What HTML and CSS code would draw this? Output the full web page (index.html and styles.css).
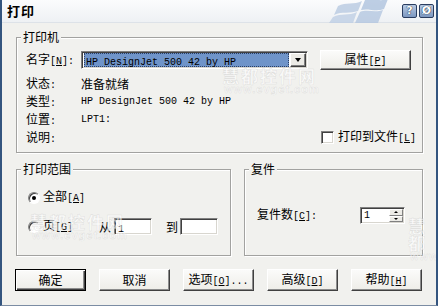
FILE: index.html
```html
<!DOCTYPE html>
<html>
<head>
<meta charset="utf-8">
<title>打印</title>
<link rel="stylesheet" href="styles.css">
</head>
<body>
<div class="win">
  <div class="titlebar">
    <span class="title">打印</span>
    <svg class="flag" width="90" height="23" viewBox="0 0 90 23">
      <path d="M18 6 C26 2 34 5 42 1 L38 11 C30 14 22 11 14 15 Z" fill="#b4c7e0"/>
      <path d="M45 0 C52 -2 60 2 68 -1 L64 9 C56 12 48 8 41 10 Z" fill="#a9bfdc"/>
      <path d="M13 17 C21 13 29 16 37 12 L33 23 L9 23 Z" fill="#bccde4"/>
      <path d="M40 12 C47 9 55 13 63 10 L58 23 L35 23 Z" fill="#b0c4df"/>
    </svg>
    <div class="tbtns"><span class="tbtn">?</span><span class="tbtn">Ø</span></div>
  </div>

  <div class="content">
    <div class="group g1">
      <span class="legend">打印机</span>
      <div class="prow first">
        <span class="lbl">名字<span class="m">[<u>N</u>]:</span></span>
        <div class="combo sunken">
          <span class="sel"><span class="m">HP DesignJet 500 42 by HP</span></span>
          <span class="drop"><i class="tri"></i></span>
        </div>
        <button class="btn prop">属性<span class="m">[<u>P</u>]</span></button>
      </div>
      <div class="prow"><span class="lbl">状态<span class="m">:</span></span><span>准备就绪</span></div>
      <div class="prow"><span class="lbl">类型<span class="m">:</span></span><span class="m">HP DesignJet 500 42 by HP</span></div>
      <div class="prow"><span class="lbl">位置<span class="m">:</span></span><span class="m">LPT1:</span></div>
      <div class="prow"><span class="lbl">说明<span class="m">:</span></span>
        <span class="chkwrap"><span class="chk sunken"></span><span>打印到文件<span class="m">[<u>L</u>]</span></span></span>
      </div>
    </div>

    <div class="row2">
      <div class="group g2">
        <span class="legend">打印范围</span>
        <div class="rrow">
          <span class="radio on"></span><span>全部<span class="m">[<u>A</u>]</span></span>
        </div>
        <div class="rrow second">
          <span class="radio"></span><span>页<span class="m">[<u>G</u>]</span></span>
          <span class="from">从</span><span class="field sunken"><span class="m">1</span></span>
          <span class="to">到</span><span class="field sunken"></span>
        </div>
      </div>
      <div class="group g3">
        <span class="legend">复件</span>
        <div class="crow">
          <span class="clbl">复件数<span class="m">[<u>C</u>]:</span></span>
          <span class="spin sunken"><span class="m num">1</span><span class="spinbtns"><span class="sb"><i class="up"></i></span><span class="sb"><i class="dn"></i></span></span></span>
        </div>
      </div>
    </div>

    <div class="btnrow">
      <button class="btn def">确定</button>
      <button class="btn">取消</button>
      <button class="btn">选项<span class="m">[<u>O</u>]...</span></button>
      <button class="btn">高级<span class="m">[<u>D</u>]</span></button>
      <button class="btn">帮助<span class="m">[<u>H</u>]</span></button>
    </div>
  </div>

  <div class="wm wm1"><span class="wmc">慧都控件网</span><span class="wme">www.evget.com</span></div>
  <div class="wm wm2"><span class="wmc">慧都控件网</span><span class="wme">www.evget.com</span></div>
  <div class="wm wm3"><span class="wmc">慧都</span><span class="wme">www</span></div>
</div>
</body>
</html>
```

FILE: styles.css
```css
html, body {
  margin: 0;
  padding: 0;
  background: #f1f1ee;
}
body {
  font-family: "Noto Sans CJK SC", "Liberation Sans", sans-serif;
  font-size: 12px;
  line-height: 14px;
  color: #000;
}
.m {
  font-family: "Liberation Mono", "Noto Sans CJK SC", monospace;
  font-size: 10px;
}
u { text-decoration: underline; text-underline-offset: 1px; }

.win {
  position: relative;
  width: 438px;
  height: 306px;
  box-sizing: border-box;
  border-left: 2px solid #34557f;
  border-right: 2px solid #34557f;
  border-bottom: 1px solid #7b8ca3;
  background: #f1f1ee;
  display: flex;
  flex-direction: column;
  overflow: hidden;
}

/* title bar */
.titlebar {
  position: relative;
  height: 23px;
  box-sizing: border-box;
  display: flex;
  align-items: center;
  padding-left: 5px;
  background: linear-gradient(#fbfcfd, #eef1f4);
  border-bottom: 1px solid #dde2e8;
}
.title {
  font-weight: bold;
  font-size: 13px;
  letter-spacing: 1px;
}
.flag {
  position: absolute;
  left: 318px;
  top: 0;
  opacity: 0.75;
}
.tbtns {
  position: relative;
  margin-left: auto;
  margin-right: 2px;
  display: flex;
  gap: 2px;
}
.tbtn {
  width: 15px;
  height: 14px;
  box-sizing: border-box;
  border: 1px solid #2a3d60;
  border-radius: 2px;
  background: linear-gradient(#b8cae2, #7c97c0);
  color: #fff;
  font-family: "DejaVu Sans", sans-serif;
  font-weight: bold;
  font-size: 11px;
  line-height: 12px;
  text-align: center;
  text-shadow: 0 0 1px #1d2b45, 0 0 1px #1d2b45;
}

/* content */
.content {
  padding: 14px 13px 0 14px;
  display: flex;
  flex-direction: column;
}
.group {
  position: relative;
  box-sizing: border-box;
  border: 1px solid #a2a2a0;
  box-shadow: inset 1px 1px 0 #fff, 1px 1px 0 #fff;
}
.legend {
  position: absolute;
  top: -8px;
  left: 4px;
  padding: 0 2px;
  background: #f1f1ee;
  white-space: nowrap;
}
.g1 {
  height: 116px;
  padding: 12px 0 0 9px;
}
.prow {
  display: flex;
  align-items: center;
  height: 18px;
  white-space: nowrap;
}
.prow.first {
  height: 20px;
  margin-bottom: 5px;
}
.lbl {
  width: 55px;
  flex: none;
}

.sunken {
  box-sizing: border-box;
  background: #fff;
  border: 1px solid;
  border-color: #808080 #fff #fff #808080;
  box-shadow: inset 1px 1px 0 #404040, inset -1px -1px 0 #d8d6cf;
}
.combo {
  width: 227px;
  height: 18px;
  display: flex;
  align-items: center;
  padding: 1px 1px 1px 2px;
}
.sel {
  flex: 1;
  height: 14px;
  box-sizing: border-box;
  margin-right: 1px;
  background: #6f94c9;
  border: 1px dotted #2b3f64;
  padding-left: 1px;
  line-height: 12px;
  color: #000;
}
.drop {
  width: 16px;
  height: 14px;
  box-sizing: border-box;
  background: #ecebe6;
  border: 1px solid;
  border-color: #fff #404040 #404040 #fff;
  box-shadow: inset -1px -1px 0 #808080;
  display: flex;
  align-items: center;
  justify-content: center;
}
.tri {
  width: 0;
  height: 0;
  border-left: 3.5px solid transparent;
  border-right: 3.5px solid transparent;
  border-top: 4px solid #000;
}

.btn {
  box-sizing: border-box;
  width: 71px;
  height: 22px;
  padding: 0;
  font-family: inherit;
  font-size: 12px;
  line-height: 14px;
  color: #000;
  background: linear-gradient(#fbfbfa, #eeede8);
  border: 1px solid;
  border-color: #fff #404040 #404040 #fff;
  box-shadow: inset -1px -1px 0 #8c8c8c;
  border-radius: 0;
  white-space: nowrap;
}
.btn.prop {
  width: 91px;
  height: 20px;
  margin-left: 12px;
}
.btn.def {
  border: 1px solid #000;
  box-shadow: inset 1px 1px 0 #fff, inset -1px -1px 0 #404040, inset -2px -2px 0 #8c8c8c;
}

.chkwrap {
  margin-left: 240px;
  display: flex;
  align-items: center;
  gap: 4px;
  position: relative;
  top: -1px;
}
.chk {
  width: 13px;
  height: 13px;
  flex: none;
}

/* row 2 */
.row2 {
  display: flex;
  gap: 13px;
  margin-top: 16px;
}
.g2 {
  width: 215px;
  height: 87px;
  padding: 19px 0 0 11px;
}
.g3 {
  flex: 1;
  height: 87px;
  padding: 37px 0 0 12px;
}
.rrow {
  display: flex;
  align-items: center;
  height: 17px;
  white-space: nowrap;
}
.rrow.second {
  margin-top: 12px;
}
.radio {
  position: relative;
  width: 12px;
  height: 12px;
  box-sizing: border-box;
  border-radius: 50%;
  background: #fff;
  border: 1px solid;
  border-color: #808080 #fff #fff #808080;
  box-shadow: inset 1px 1px 0 #404040;
  margin-right: 3px;
  flex: none;
}
.radio.on::after {
  content: "";
  position: absolute;
  left: 3px;
  top: 3px;
  width: 4px;
  height: 4px;
  border-radius: 50%;
  background: #000;
}
.from { margin-left: 26px; margin-right: 3px; }
.to { margin-left: 14px; margin-right: 2px; }
.field {
  width: 38px;
  height: 17px;
  padding: 2px 0 0 3px;
  line-height: 12px;
}

.crow {
  display: flex;
  align-items: center;
  white-space: nowrap;
}
.clbl { width: 103px; }
.spin {
  width: 45px;
  height: 17px;
  display: flex;
  padding: 1px 1px 1px 3px;
}
.num {
  flex: 1;
  line-height: 13px;
}
.spinbtns {
  width: 14px;
  display: flex;
  flex-direction: column;
}
.sb {
  flex: 1;
  box-sizing: border-box;
  background: #ecebe6;
  border: 1px solid;
  border-color: #fff #808080 #808080 #fff;
  display: flex;
  align-items: center;
  justify-content: center;
}
.up, .dn {
  width: 0;
  height: 0;
  border-left: 2px solid transparent;
  border-right: 2px solid transparent;
}
.up { border-bottom: 2px solid #000; }
.dn { border-top: 2px solid #000; }

/* buttons */
.btnrow {
  display: flex;
  gap: 13px;
  margin-top: 13px;
  margin-left: -1px;
}

/* watermarks */
.wm {
  position: absolute;
  display: flex;
  flex-direction: column;
  align-items: flex-start;
  pointer-events: none;
  color: rgba(255, 255, 255, 0.6);
  -webkit-text-stroke: 0.5px rgba(150, 150, 150, 0.25);
}
.wmc {
  font-family: "Noto Sans CJK SC", sans-serif;
  font-weight: bold;
  font-size: 17px;
  line-height: 17px;
  letter-spacing: 2px;
}
.wme {
  font-family: "Liberation Sans", sans-serif;
  font-weight: bold;
  font-size: 11px;
  line-height: 10px;
  letter-spacing: 1px;
  padding-left: 2px;
}
.wm1 { left: 220px; top: 67px; }
.wm2 { left: 28px; top: 213px; }
.wm3 { left: 406px; top: 217px; }
```
